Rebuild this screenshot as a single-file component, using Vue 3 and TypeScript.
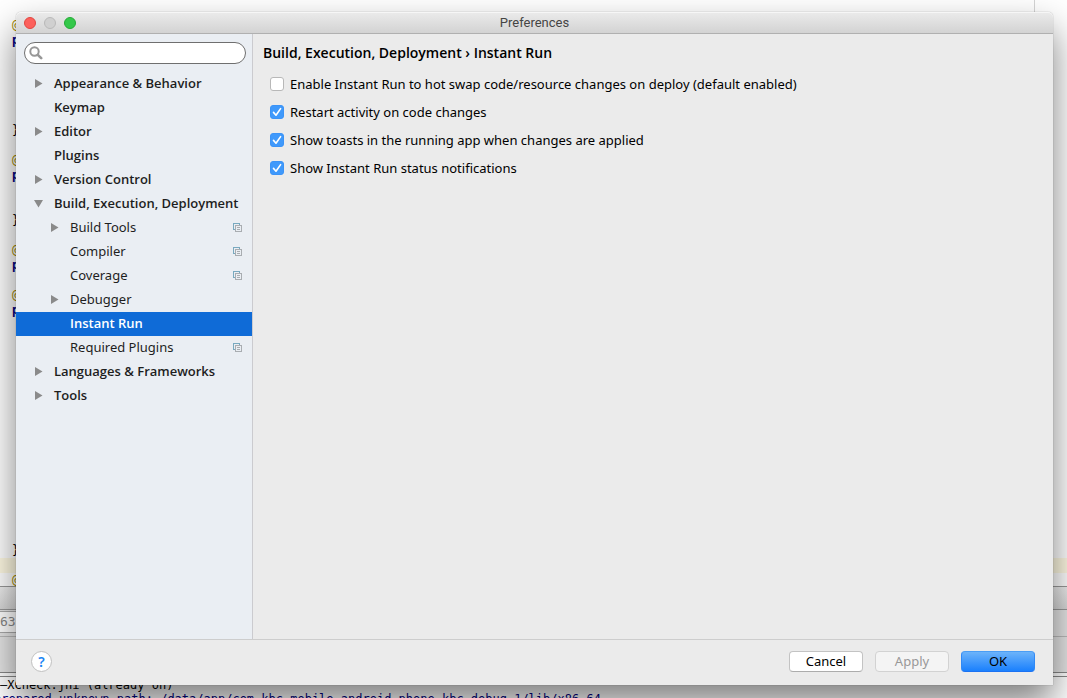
<script setup lang="ts">
import { ref } from 'vue'

interface TreeItem {
  label: string
  level: number
  state?: 'closed' | 'open'
  project?: boolean
}

const items: TreeItem[] = [
  { label: 'Appearance & Behavior', level: 0, state: 'closed' },
  { label: 'Keymap', level: 0 },
  { label: 'Editor', level: 0, state: 'closed' },
  { label: 'Plugins', level: 0 },
  { label: 'Version Control', level: 0, state: 'closed' },
  { label: 'Build, Execution, Deployment', level: 0, state: 'open' },
  { label: 'Build Tools', level: 1, state: 'closed', project: true },
  { label: 'Compiler', level: 1, project: true },
  { label: 'Coverage', level: 1, project: true },
  { label: 'Debugger', level: 1, state: 'closed' },
  { label: 'Instant Run', level: 1 },
  { label: 'Required Plugins', level: 1, project: true },
  { label: 'Languages & Frameworks', level: 0, state: 'closed' },
  { label: 'Tools', level: 0, state: 'closed' },
]

const selected = ref('Instant Run')
const query = ref('')

const options = ref([
  { id: 'enable', label: 'Enable Instant Run to hot swap code/resource changes on deploy (default enabled)', on: false },
  { id: 'restart', label: 'Restart activity on code changes', on: true },
  { id: 'toasts', label: 'Show toasts in the running app when changes are applied', on: true },
  { id: 'status', label: 'Show Instant Run status notifications', on: true },
])

// First characters of the code lines that show beside the dialog, by line number.
const code: Record<number, string> = {
  0: '@', 1: 'p', 7: '}', 9: '@', 10: 'p', 13: '}', 15: '@', 16: 'p', 18: '@', 19: 'p', 35: '}', 37: '@',
}
const lines = Array.from({ length: 38 }, (_, i) => code[i] ?? '')
const kind = (c: string) => (c === '@' ? 'annotation' : c === 'p' ? 'keyword' : '')
</script>

<template>
  <div class="screen">
    <div class="ide" aria-hidden="true">
      <div class="editor">
        <div v-for="(c, i) in lines" :key="i" class="line" :class="[kind(c), { current: i === 36 }]">{{ c }}</div>
      </div>
      <div class="toolbar"></div>
      <div class="filter"><span class="pid">630</span></div>
      <div class="tabs"></div>
      <div class="console">
        <div>–XCheck:jni (already on)</div>
        <div class="path">prepared unknown path: /data/app/com.kbc.mobile.android.phone.kbc.debug-1/lib/x86_64</div>
      </div>
    </div>

    <section class="window" aria-label="Preferences">
      <header class="titlebar">
        <div class="lights">
          <button class="light close" aria-label="Close"></button>
          <button class="light minimize" aria-label="Minimize" disabled></button>
          <button class="light maximize" aria-label="Zoom"></button>
        </div>
        <h1>Preferences</h1>
      </header>

      <div class="body">
        <aside class="sidebar">
          <label class="search">
            <svg width="14" height="14" viewBox="0 0 14 14" aria-hidden="true">
              <circle cx="5.5" cy="5.5" r="4.2" fill="none" stroke="#979797" stroke-width="2" />
              <path d="M8.8 8.8 12.2 12.2" stroke="#979797" stroke-width="2.6" stroke-linecap="round" />
            </svg>
            <input v-model="query" type="text" aria-label="Search settings" />
          </label>
          <nav class="tree">
            <button
              v-for="item in items"
              :key="item.label"
              class="row"
              :class="{ child: item.level === 1, selected: item.label === selected }"
              @click="selected = item.label"
            >
              <span class="arrow">
                <svg v-if="item.state === 'closed'" width="9" height="9" viewBox="0 0 9 9"><path d="M1 0 8.5 4.5 1 9z" fill="#8a8a8a" /></svg>
                <svg v-else-if="item.state === 'open'" width="9" height="9" viewBox="0 0 9 9"><path d="M0 1H9L4.5 8.5z" fill="#8a8a8a" /></svg>
              </span>
              <span class="name">{{ item.label }}</span>
              <svg v-if="item.project" width="9" height="9" viewBox="0 0 9 9" fill="none" shape-rendering="crispEdges">
                <path d="M2 6.5H.5V.5H6.5V2" stroke="#79a9bf" />
                <path d="M2.5 2.5H8.5V8.5H2.5z" stroke="#a9adb1" />
                <path d="M4 4.5H7M4 6.5H7" stroke="#a9adb1" />
              </svg>
            </button>
          </nav>
        </aside>

        <main class="content">
          <h2>Build, Execution, Deployment › Instant Run</h2>
          <div class="options">
            <label v-for="o in options" :key="o.id" class="option" :for="o.id">
              <span class="box">
                <input :id="o.id" v-model="o.on" type="checkbox" />
                <svg v-if="o.on" width="14" height="14" viewBox="0 0 14 14" aria-hidden="true">
                  <path d="M3.5 7.4 6 10.2 10.6 3.6" fill="none" stroke="#fff" stroke-width="1.6" stroke-linecap="round" stroke-linejoin="round" />
                </svg>
              </span>
              {{ o.label }}
            </label>
          </div>
        </main>
      </div>

      <footer class="footer">
        <button class="help" aria-label="Help">?</button>
        <div class="actions">
          <button class="btn">Cancel</button>
          <button class="btn" disabled>Apply</button>
          <button class="btn primary">OK</button>
        </div>
      </footer>
    </section>
  </div>
</template>

<style>
body {
  margin: 0;
  background: #fff;
}
</style>

<style scoped>
.screen {
  display: grid;
  grid-template: minmax(0, 1fr) / minmax(0, 1fr);
  height: 100vh;
  overflow: hidden;
  font: 13px/24px "Noto Sans", "Open Sans", sans-serif;
  color: #000;
}
.ide,
.window {
  grid-area: 1 / 1;
}
button,
input {
  font: inherit;
  color: inherit;
  margin: 0;
  padding: 0;
  border: 0;
  box-sizing: border-box;
}

.ide {
  display: flex;
  flex-direction: column;
  overflow: hidden;
  font: 12px/14px "DejaVu Sans Mono", monospace;
}
.editor {
  flex: 1;
  overflow: hidden;
  padding-top: 18px;
  box-sizing: border-box;
  background: linear-gradient(#d4d4d4, #d4d4d4) right 32px top / 1px 100% no-repeat #fff;
}
.line {
  height: 15px;
  line-height: 15px;
  padding-left: 12px;
}
.annotation { color: #a08a00; }
.keyword { color: #000080; font-weight: bold; }
.current { background: #fffae3; }
.toolbar {
  height: 22px;
  border-top: 1px solid #999;
  border-bottom: 1px solid #999;
  background: linear-gradient(#eee, #d8d8d8);
}
.filter {
  height: 26px;
  background: #e6e6e6;
  border-bottom: 1px solid #bbb;
}
.pid {
  display: block;
  width: 120px;
  margin-top: 1px;
  font-size: 13px;
  line-height: 20px;
  color: #888;
  background: #fff;
  border: solid #aaa;
  border-width: 1px 0;
}
.tabs {
  height: 35px;
  background: #e6e6e6;
  border-bottom: 1px solid #888;
}
.console {
  height: 20px;
  margin-top: 3px;
  padding-top: 1px;
  border-top: 1px solid #888;
  white-space: nowrap;
  overflow: hidden;
  background: #fff;
}
.path {
  text-indent: -6px;
  color: #000080;
}

.window {
  display: flex;
  flex-direction: column;
  margin: 12px 14px 13px 16px;
  border-radius: 5px 5px 0 0;
  background: #ebebeb;
  box-shadow: 0 0 1px rgba(0, 0, 0, 0.5), 0 18px 36px rgba(0, 0, 0, 0.5);
  z-index: 1;
}
.titlebar {
  display: grid;
  grid-template-columns: 1fr auto 1fr;
  align-items: center;
  height: 22px;
  box-sizing: border-box;
  border-bottom: 1px solid #b0b0b0;
  border-radius: 5px 5px 0 0;
  background: linear-gradient(#ebebeb, #d3d3d3);
  box-shadow: inset 0 1px #f6f6f6;
}
.titlebar h1 {
  margin: 0;
  font: 13px/20px Roboto, sans-serif;
  color: #454545;
}
.lights {
  display: flex;
  gap: 8px;
  padding-left: 8px;
}
.light {
  width: 12px;
  height: 12px;
  border-radius: 50%;
  border: 1px solid;
}
.close { background: #fc605b; border-color: #e2463f; }
.minimize { background: #d0d0d0; border-color: #b9b9b9; }
.maximize { background: #34c84a; border-color: #24ab36; }

.body {
  flex: 1;
  display: flex;
  min-height: 0;
}
.sidebar {
  width: 236px;
  flex: none;
  background: #eaeef3;
  border-right: 1px solid #cbcbcf;
}
.search {
  display: flex;
  align-items: center;
  gap: 4px;
  height: 22px;
  margin: 8px 6px 8px 8px;
  padding: 0 10px 0 4px;
  box-sizing: border-box;
  border: 1px solid #6f6f6f;
  border-radius: 11px;
  background: #fff;
}
.search input {
  flex: 1;
  min-width: 0;
  height: 18px;
  background: none;
  outline: none;
}
.row {
  display: flex;
  align-items: center;
  width: 100%;
  height: 24px;
  padding: 0 10px 2px 18px;
  background: none;
  font-family: "Open Sans", "Noto Sans", sans-serif;
  font-weight: 600;
  line-height: 22px;
  color: #1e1e1e;
  text-align: left;
}
.child {
  padding-left: 34px;
  font-family: "Noto Sans", "Open Sans", sans-serif;
  font-weight: normal;
}
.selected {
  background: #0f6bd7;
  color: #fff;
  font-family: "Open Sans", "Noto Sans", sans-serif;
  font-weight: 600;
}
.arrow {
  display: flex;
  flex: none;
  width: 20px;
}
.name {
  flex: 1;
  white-space: nowrap;
}

.content {
  flex: 1;
  padding: 7px 10px;
}
.content h2 {
  margin: 0;
  font: 600 14px/24px "Open Sans", "Noto Sans", sans-serif;
}
.options {
  padding: 5px 7px;
}
.option {
  display: flex;
  align-items: center;
  gap: 6px;
  height: 28px;
}
.box {
  display: grid;
}
.box > * {
  grid-area: 1 / 1;
}
.box input {
  appearance: none;
  width: 14px;
  height: 14px;
  border: 1px solid #b8b8b8;
  border-radius: 3px;
  background: #fff;
}
.box input:checked {
  border-color: #3b93f7;
  background: #3f99fb;
}
.box svg {
  pointer-events: none;
}

.footer {
  display: flex;
  align-items: center;
  justify-content: space-between;
  height: 46px;
  box-sizing: border-box;
  padding: 0 18px 2px 15px;
  border-top: 1px solid #cdcdcd;
}
.help {
  width: 21px;
  height: 21px;
  border: 1px solid #c0c0c0;
  border-radius: 50%;
  background: #fff;
  color: #1a85f5;
  font-size: 14px;
  font-weight: 600;
  line-height: 18px;
}
.actions {
  display: flex;
  gap: 12px;
}
.btn {
  width: 74px;
  height: 21px;
  padding-bottom: 2px;
  border: 1px solid #c3c3c3;
  border-bottom-color: #acacac;
  border-radius: 4px;
  background: #fff;
  line-height: 16px;
}
.btn:disabled {
  background: #f4f4f4;
  border-color: #d2d2d2;
  color: #989898;
}
.primary {
  border-color: #4a9df5 #3089f5 #1b72f2;
  background: linear-gradient(#6cb3fa, #1a80fd);
}
</style>
